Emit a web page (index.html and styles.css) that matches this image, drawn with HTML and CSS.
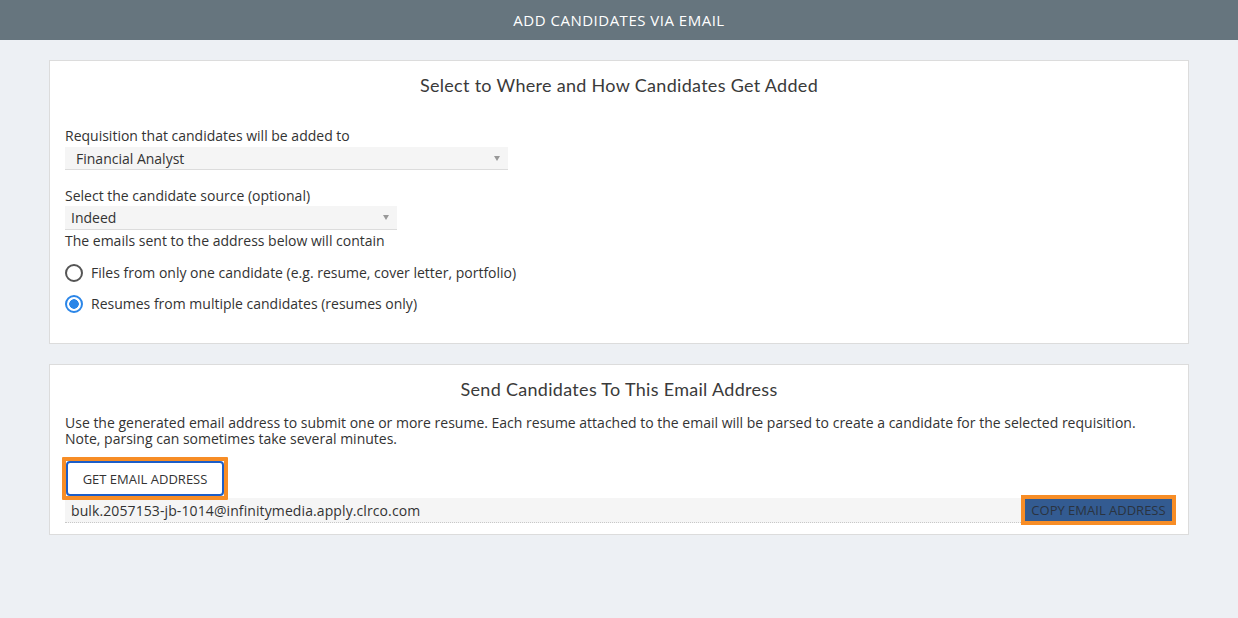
FILE: index.html
```html
<!DOCTYPE html>
<html>
<head>
<meta charset="utf-8">
<link rel="stylesheet" href="styles.css">
</head>
<body>
<header class="topbar">ADD CANDIDATES VIA EMAIL</header>
<main class="content">
  <section class="card card-select">
    <h2 class="card-title">Select to Where and How Candidates Get Added</h2>
    <div class="field field-req">
      <label class="field-label">Requisition that candidates will be added to</label>
      <div class="select select-req"><span class="select-value">Financial Analyst</span><span class="caret"></span></div>
    </div>
    <div class="field field-src">
      <label class="field-label">Select the candidate source (optional)</label>
      <div class="select select-src"><span class="select-value">Indeed</span><span class="caret"></span></div>
    </div>
    <p class="field-label contain">The emails sent to the address below will contain</p>
    <div class="radios">
      <div class="radio"><span class="radio-dot"></span><span>Files from only one candidate (e.g. resume, cover letter, portfolio)</span></div>
      <div class="radio"><span class="radio-dot checked"></span><span>Resumes from multiple candidates (resumes only)</span></div>
    </div>
  </section>
  <section class="card card-email">
    <h2 class="card-title">Send Candidates To This Email Address</h2>
    <p class="desc">Use the generated email address to submit one or more resume. Each resume attached to the email will be parsed to create a candidate for the selected requisition. Note, parsing can sometimes take several minutes.</p>
    <div class="get-wrap"><button class="btn-get">GET EMAIL ADDRESS</button></div>
    <div class="email-row">
      <span class="email-text">bulk.2057153-jb-1014@infinitymedia.apply.clrco.com</span>
      <span class="copy-wrap"><button class="btn-copy">COPY EMAIL ADDRESS</button></span>
    </div>
  </section>
</main>
</body>
</html>
```
FILE: styles.css
```css
* { box-sizing: border-box; }
html, body { margin: 0; padding: 0; }
body {
  background: #edf0f4;
  font-family: "Open Sans", "DejaVu Sans", sans-serif;
  font-size: 14px;
  color: #333;
  width: 1238px;
  height: 618px;
  overflow: hidden;
}
.topbar {
  height: 40px;
  background: #66757e;
  color: #fff;
  font-size: 15px;
  letter-spacing: 0.5px;
  display: flex;
  align-items: center;
  justify-content: center;
}
.content {
  padding: 20px 49px 0;
  display: flex;
  flex-direction: column;
  gap: 20px;
}
.card {
  background: #fff;
  border: 1px solid #dcdcdc;
  padding: 0 15px;
}
.card-select { height: 284px; }
.card-email { height: 171px; }
.card-title {
  font-family: "Lato", "Open Sans", sans-serif;
  font-weight: 400;
  font-size: 18px;
  letter-spacing: 0.3px;
  color: #3a3a3a;
  text-align: center;
  margin: 0;
  line-height: 22px;
  padding-top: 13px;
}
.field-label {
  display: block;
  line-height: 20px;
  margin: 0;
}
.field-req { margin-top: 30px; }
.field-src { margin-top: 16px; }
.select {
  background: #f5f5f5;
  border-bottom: 1px solid #dcdcdc;
  display: flex;
  align-items: center;
  justify-content: space-between;
}
.select-req { width: 443px; height: 23px; margin-top: 1px; padding: 0 8px 0 11px; }
.select-src { width: 332px; height: 24px; margin-top: 0; padding: 0 8px 0 6px; }
.caret {
  width: 0; height: 0;
  border-left: 3px solid transparent;
  border-right: 3px solid transparent;
  border-top: 5px solid #999;
}
.contain { margin-top: 1px; }
.radios { display: flex; flex-direction: column; gap: 11px; margin-top: 12px; }
.radio { display: flex; align-items: center; gap: 8px; line-height: 20px; }
.radio-dot {
  width: 18px; height: 18px;
  border-radius: 50%;
  border: 2px solid #555;
  display: inline-block;
  flex: none;
}
.radio-dot.checked {
  border-color: #2b86e8;
  background: radial-gradient(circle, #2b86e8 0 4.5px, #fff 5px);
}
.desc {
  margin: 15px 0 0;
  line-height: 16px;
  font-size: 14px;
}
.get-wrap {
  margin-top: 10px;
  margin-left: -3px;
  display: inline-block;
  border: 4px solid #f78d26;
  border-radius: 1px;
}
.btn-get {
  font-family: "Open Sans", sans-serif;
  font-size: 13px;
  color: #333;
  background: #fff;
  border: 2px solid #1c5ec8;
  border-radius: 4px;
  height: 35px;
  width: 158px;
  display: block;
}
.email-row {
  margin-top: -2px;
  height: 25px;
  background: #f5f5f5;
  border-bottom: 1px dotted #c8c8c8;
  display: flex;
  align-items: center;
  justify-content: space-between;
  padding-left: 6px;
}
.email-text { letter-spacing: 0.1px; }
.copy-wrap {
  border: 4px solid #f78d26;
  margin-right: -3px;
  display: inline-block;
}
.btn-copy {
  background: #335b91;
  color: #2a3340;
  border: none;
  font-family: "Open Sans", sans-serif;
  font-size: 13px;
  height: 22px;
  width: 147px;
  padding: 0;
  display: block;
}
```
